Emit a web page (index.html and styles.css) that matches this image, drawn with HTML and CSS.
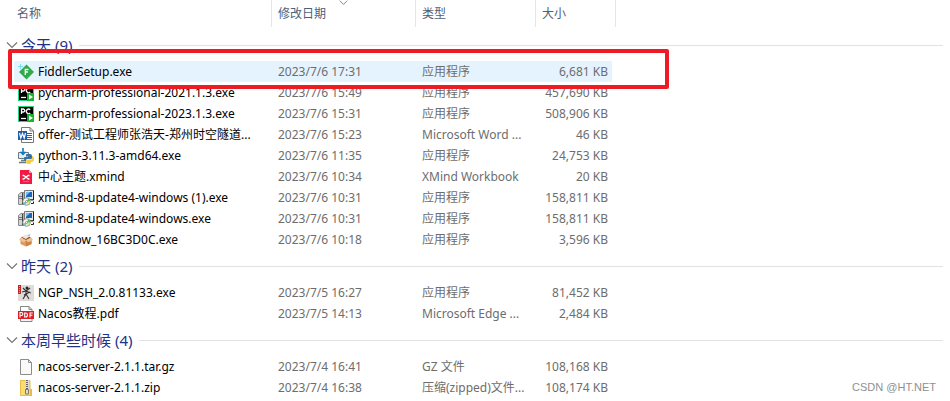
FILE: index.html
```html
<!DOCTYPE html>
<html lang="zh-CN">

<head>
  <meta charset="UTF-8">
  <meta name="viewport" content="width=device-width, initial-scale=1.0">
  <title>下载</title>
  <link rel="stylesheet" href="styles.css">
</head>

<body>
  <svg class="sprite" aria-hidden="true">
    <symbol id="chevron" viewBox="0 0 12 12">
      <path d="M1 3.500l5 5 5-5" fill="none" stroke="#777" stroke-width="1.200" />
    </symbol>
    <symbol id="fiddler" viewBox="0 0 16 16">
      <path d="M8.500 .5L16 8l-7.500 7.500L1 8z" fill="#2fab4a" />
      <path d="M7.300 11V5.500h3.200M7.300 8h2.600" fill="none" stroke="#fff" stroke-width="1.300" />
      <path d="M2.500 0v5M0 2.500h5" stroke="#7fdcf0" stroke-width="1" />
    </symbol>
    <symbol id="pycharm" viewBox="0 0 16 16">
      <path d="M0 0h16v16H0z" fill="#21d789" />
      <path d="M1 1h14v14H1z" fill="#000" />
      <path d="M3.500 8V3h1.700a1.500 1.500 0 0 1 0 3H3.500M12.200 3.700a2.300 2.300 0 1 0 0 3.400" fill="none" stroke="#fff" stroke-width="1.300" />
      <path d="M3 12.500h5" stroke="#fff" stroke-width="1.300" />
      <path d="M9 8h7v8H9z" fill="#17b42f" />
      <path d="M11 9.500v5l4-2.500z" fill="#fff" />
    </symbol>
    <symbol id="word" viewBox="0 0 16 16">
      <path d="M3.500 .5h8.500l3.500 3.500v11.500h-12z" fill="#fff" stroke="#777" />
      <path d="M12 .5V4h3.500" fill="none" stroke="#777" />
      <path d="M9 6.500h5M9 8.500h5M9 10.500h5M9 12.500h5" stroke="#2b62b5" />
      <path d="M0 4h9v9H0z" fill="#1f5dae" />
      <path d="M1.500 6l1.300 5 1.700-4.500L6.200 11l1.300-5" fill="none" stroke="#fff" stroke-width="1.200" />
    </symbol>
    <symbol id="python" viewBox="0 0 16 16">
      <path d="M.5 4.500h10v6H.5z" fill="#e4eef2" stroke="#687880" />
      <path d="M3 12.500h5M1 14.500h7" stroke="#687880" stroke-width="1.300" />
      <path d="M5 0v6M2.500 3.800L5 6.300l2.500-2.500" fill="none" stroke="#1479bd" stroke-width="1.600" />
      <path d="M9 6h3q2 0 2 2v2q0 1-1 1H9q-1 0-1 2-2 0-2-2V10q0-1 1-1h4V8.500H8V7q0-1 1-1z" fill="#356fa3" />
      <path d="M14 8q2 0 2 3t-2 3h-1v1q0 1-2 1-3 0-3-2v-1q0-1.500 1.500-1.500H13q1 0 1-1.500z" fill="#f7cd46" />
    </symbol>
    <symbol id="xmind" viewBox="0 0 16 16">
      <path d="M2 1h9l3 3v11H2z" fill="#f01b45" />
      <path d="M11 1l3 3h-3z" fill="#ff94a5" />
      <path d="M4.500 6.500h1.200L8 8l2.300-1.500h1.200M4.500 10h1.200L8 8l2.300 2h1.200" fill="none" stroke="#fff" stroke-width="1.400" />
      <path d="M5 12.500h6" stroke="#f8758d" stroke-width=".8" />
    </symbol>
    <symbol id="setup" viewBox="0 0 16 16">
      <path d="M.5 4.500L3 2.500h3v12H.5z" fill="#d4d4d4" stroke="#8a8a8a" />
      <path d="M4.500 3v11" stroke="#444" />
      <path d="M1 6.500h3M1 8.500h3" stroke="#777" />
      <path d="M6.500 .5h9v9h-9z" fill="#e6e6e6" stroke="#777" />
      <path d="M15.500 .5v9.500h-3M13 13.500h2.500v-2" fill="none" stroke="#222" />
      <path d="M8 2h6v5H8z" fill="#1c66b8" />
      <path d="M8 2h4L8 6z" fill="#72bdec" />
      <circle cx="8.500" cy="11.500" r="3.800" fill="#f2f5ee" stroke="#777" stroke-width=".8" />
      <path d="M8.500 11.500l2-3a3.700 3.700 0 0 1 1.700 3z" fill="#45c83d" />
      <path d="M8.500 11.500L5 12.500a3.600 3.600 0 0 0 3 2.600z" fill="#62cfc6" />
      <path d="M8.500 11.500l3.500 1-2 2.300z" fill="#e9e269" />
      <circle cx="8.500" cy="11.500" r="1" fill="#fff" stroke="#555" stroke-width=".5" />
    </symbol>
    <symbol id="mindnow" viewBox="0 0 16 16">
      <path d="M3 5.500L8 3l5 2.500L8 8.500z" fill="#8d5632" />
      <path d="M4 5l3.500-2.500L12 4 8 7z" fill="#f1e7df" />
      <path d="M9 3l3.500-.8-1 2z" fill="#8cb7dc" />
      <path d="M2.500 6L8 8.500 13.500 6v6L8 14.500 2.500 12z" fill="#dc9a5f" />
      <path d="M8 8.500l5.500-2.500v6L8 14.500z" fill="#c9824a" />
      <path d="M2.500 5.500L8 8l-2 2.500L1 8zM13.500 5.500L8 8l2 2.500L15 8z" fill="#f3c292" />
    </symbol>
    <symbol id="ngp" viewBox="0 0 16 16">
      <path d="M0 0h16v16H0z" fill="#dedbd9" />
      <path d="M0 0h3v9H0z" fill="#b42c2b" />
      <path d="M1.500 1v7" stroke="#e79b93" stroke-dasharray="1 1" />
      <path d="M5 3l3 3 4-3M4 7l4-1 5 2M8 5v4l-3 5M8 9l3 5M6 10l6-3" fill="none" stroke="#333" stroke-width="1.100" />
      <circle cx="9" cy="3" r="1.500" fill="#222" />
    </symbol>
    <symbol id="pdf" viewBox="0 0 16 16">
      <path d="M2.500 .5h8.500l3 3v12H2.500z" fill="#fff" stroke="#888" />
      <path d="M11 .5v3h3" fill="none" stroke="#888" />
      <path d="M0 5h16v8H0z" fill="#dd2025" />
      <path d="M2 11.500v-5h1.300a1.300 1.300 0 0 1 0 3H2M6.700 7v4h.8a2 2 0 0 0 0-4zM12 11.500V7h2.800M12 9.200h2.400" fill="none" stroke="#fff" stroke-width="1.100" />
    </symbol>
    <symbol id="blank" viewBox="0 0 16 16">
      <path d="M2.500 .5h8l3 3v12h-11z" fill="#fafafa" stroke="#8c8c8c" />
      <path d="M10.500 .5v3h3" fill="none" stroke="#8c8c8c" />
    </symbol>
    <symbol id="zip" viewBox="0 0 16 16">
      <path d="M2 0h10v16H2z" fill="#fbdc70" />
      <path d="M12 9h2v7h-2z" fill="#e8b738" />
      <path d="M2.500 .5v15h11v-6H12v-9z" fill="none" stroke="#e7bd4b" />
      <path d="M7 0h4v11H7z" fill="#d9d9d9" />
      <path d="M9 0v9" stroke="#666" stroke-width="2" stroke-dasharray="1 1" />
      <path d="M7.500 9.500h3V14h-3z" fill="#ddd" stroke="#777" />
    </symbol>
  </svg>

  <main class="explorer">
    <table class="files">
      <colgroup>
        <col class="col-gutter">
        <col class="col-name">
        <col class="col-date">
        <col class="col-type">
        <col class="col-size">
        <col>
      </colgroup>
      <thead>
        <tr>
          <td></td>
          <th class="head-name" scope="col">名称</th>
          <th class="sorted" scope="col" aria-sort="descending">修改日期<svg class="sort"><use href="#chevron" /></svg></th>
          <th scope="col">类型</th>
          <th scope="col">大小</th>
          <td></td>
        </tr>
      </thead>
      <tbody>
        <tr class="group">
          <th colspan="6" scope="rowgroup">
            <button type="button" aria-expanded="true"><svg><use href="#chevron" /></svg>今天 (9)</button>
          </th>
        </tr>
        <tr class="selected">
          <td></td>
          <td><div class="name"><svg><use href="#fiddler" /></svg><span>FiddlerSetup.exe</span></div></td>
          <td>2023/7/6 17:31</td>
          <td>应用程序</td>
          <td>6,681 KB</td>
        </tr>
        <tr>
          <td></td>
          <td><div class="name"><svg><use href="#pycharm" /></svg><span>pycharm-professional-2021.1.3.exe</span></div></td>
          <td>2023/7/6 15:49</td>
          <td>应用程序</td>
          <td>457,690 KB</td>
        </tr>
        <tr>
          <td></td>
          <td><div class="name"><svg><use href="#pycharm" /></svg><span>pycharm-professional-2023.1.3.exe</span></div></td>
          <td>2023/7/6 15:31</td>
          <td>应用程序</td>
          <td>508,906 KB</td>
        </tr>
        <tr>
          <td></td>
          <td><div class="name"><svg><use href="#word" /></svg><span>offer-测试工程师张浩天-郑州时空隧道...</span></div></td>
          <td>2023/7/6 15:23</td>
          <td>Microsoft Word ...</td>
          <td>46 KB</td>
        </tr>
        <tr>
          <td></td>
          <td><div class="name"><svg><use href="#python" /></svg><span>python-3.11.3-amd64.exe</span></div></td>
          <td>2023/7/6 11:35</td>
          <td>应用程序</td>
          <td>24,753 KB</td>
        </tr>
        <tr>
          <td></td>
          <td><div class="name"><svg><use href="#xmind" /></svg><span>中心主题.xmind</span></div></td>
          <td>2023/7/6 10:34</td>
          <td>XMind Workbook</td>
          <td>20 KB</td>
        </tr>
        <tr>
          <td></td>
          <td><div class="name"><svg><use href="#setup" /></svg><span>xmind-8-update4-windows (1).exe</span></div></td>
          <td>2023/7/6 10:31</td>
          <td>应用程序</td>
          <td>158,811 KB</td>
        </tr>
        <tr>
          <td></td>
          <td><div class="name"><svg><use href="#setup" /></svg><span>xmind-8-update4-windows.exe</span></div></td>
          <td>2023/7/6 10:31</td>
          <td>应用程序</td>
          <td>158,811 KB</td>
        </tr>
        <tr>
          <td></td>
          <td><div class="name"><svg><use href="#mindnow" /></svg><span>mindnow_16BC3D0C.exe</span></div></td>
          <td>2023/7/6 10:18</td>
          <td>应用程序</td>
          <td>3,596 KB</td>
        </tr>
      </tbody>
      <tbody>
        <tr class="group">
          <th colspan="6" scope="rowgroup">
            <button type="button" aria-expanded="true"><svg><use href="#chevron" /></svg>昨天 (2)</button>
          </th>
        </tr>
        <tr>
          <td></td>
          <td><div class="name"><svg><use href="#ngp" /></svg><span>NGP_NSH_2.0.81133.exe</span></div></td>
          <td>2023/7/5 16:27</td>
          <td>应用程序</td>
          <td>81,452 KB</td>
        </tr>
        <tr>
          <td></td>
          <td><div class="name"><svg><use href="#pdf" /></svg><span>Nacos教程.pdf</span></div></td>
          <td>2023/7/5 14:13</td>
          <td>Microsoft Edge ...</td>
          <td>2,484 KB</td>
        </tr>
      </tbody>
      <tbody>
        <tr class="group">
          <th colspan="6" scope="rowgroup">
            <button type="button" aria-expanded="true"><svg><use href="#chevron" /></svg>本周早些时候 (4)</button>
          </th>
        </tr>
        <tr>
          <td></td>
          <td><div class="name"><svg><use href="#blank" /></svg><span>nacos-server-2.1.1.tar.gz</span></div></td>
          <td>2023/7/4 16:41</td>
          <td>GZ 文件</td>
          <td>108,168 KB</td>
        </tr>
        <tr>
          <td></td>
          <td><div class="name"><svg><use href="#zip" /></svg><span>nacos-server-2.1.1.zip</span></div></td>
          <td>2023/7/4 16:38</td>
          <td>压缩(zipped)文件...</td>
          <td>108,174 KB</td>
        </tr>
        <tr>
          <td></td>
          <td><div class="name"><svg><use href="#zip" /></svg></div></td>
          <td></td>
          <td></td>
          <td></td>
        </tr>
      </tbody>
    </table>
    <div class="marker"></div>
    <div class="watermark">CSDN @HT.NET</div>
  </main>
</body>

</html>
```

FILE: styles.css
```css
* {
  box-sizing: border-box;
  margin: 0;
  padding: 0;
}

body {
  background: #fff;
  font-family: "Noto Sans", "Noto Sans CJK SC", sans-serif;
  font-size: 12px;
  line-height: 20px;
  color: #6d6d6d;
}

.sprite {
  display: none;
}

.explorer {
  position: relative;
  height: 100vh;
  overflow: hidden;
}

.files {
  width: 100%;
  table-layout: fixed;
  border-collapse: separate;
  border-spacing: 0;
  white-space: nowrap;
}

.col-gutter {
  width: 14px;
}

.col-name {
  width: 258px;
}

.col-date {
  width: 144px;
}

.col-type {
  width: 120px;
}

.col-size {
  width: 80px;
}

th {
  font-weight: normal;
  text-align: left;
}

thead th {
  height: 27px;
  padding-left: 6px;
  border-right: 1px solid #e5e5e5;
  color: #4c607a;
}

thead .head-name {
  padding-left: 3px;
}

.sorted {
  position: relative;
}

.sort {
  position: absolute;
  top: -2px;
  left: 67px;
  width: 9px;
  height: 9px;
}

/* group headings */
.group th {
  height: 32px;
  padding: 0 7px 0 6px;
}

tbody:nth-of-type(1) .group th {
  height: 34px;
  padding-top: 2px;
}

.group button {
  display: flex;
  align-items: center;
  gap: 3px;
  width: 100%;
  border: 0;
  background: none;
  font: inherit;
  font-size: 15px;
  color: #1e3287;
}

.group button::after {
  content: "";
  flex: 1;
  height: 1px;
  margin-left: 4px;
  background: #e2e2e2;
}

.group svg {
  width: 12px;
  height: 12px;
}

/* file rows */
tbody td {
  height: 21px;
  padding-left: 6px;
}

tbody td:first-child {
  padding: 0;
}

tbody td:nth-child(2) {
  padding-left: 4px;
}

tbody td:nth-child(5) {
  padding-right: 4px;
  border-right: 4px solid transparent;
  background-clip: padding-box;
  text-align: right;
}

.selected td:not(:first-child) {
  background-color: #e5f3ff;
}

.name {
  display: flex;
  align-items: center;
  gap: 4px;
  color: #000;
}

.name svg {
  width: 16px;
  height: 16px;
}

.marker {
  position: absolute;
  top: 49px;
  left: 8px;
  width: 661px;
  height: 40px;
  border: 4px solid #ed1c24;
  border-radius: 2px;
}

.watermark {
  position: absolute;
  right: 14px;
  bottom: 4px;
  font-family: "Liberation Sans", sans-serif;
  font-size: 11px;
  color: #8f8f8f;
}
```
